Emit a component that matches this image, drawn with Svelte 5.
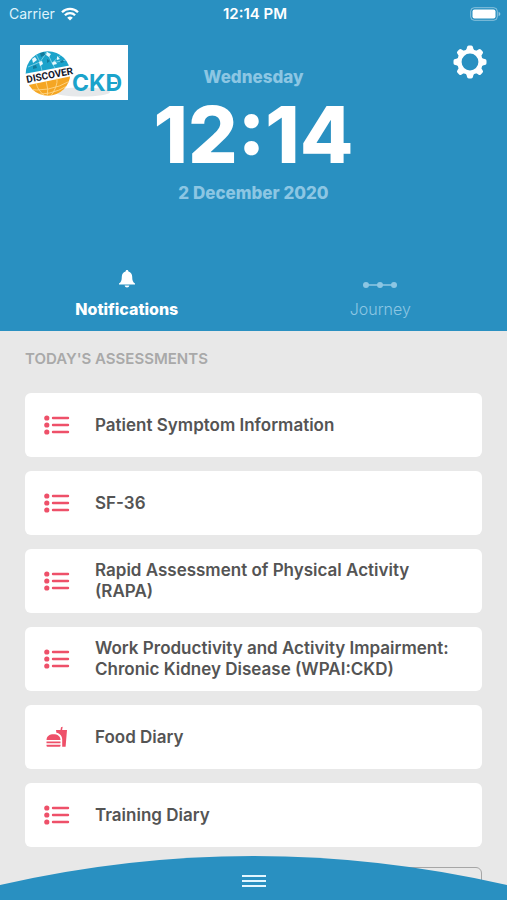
<script lang="ts">
  type Assessment = { id: number; title: string; icon: 'list' | 'food' };

  const assessments: Assessment[] = [
    { id: 1, title: 'Patient Symptom Information', icon: 'list' },
    { id: 2, title: 'SF-36', icon: 'list' },
    { id: 3, title: 'Rapid Assessment of Physical Activity (RAPA)', icon: 'list' },
    { id: 4, title: 'Work Productivity and Activity Impairment: Chronic Kidney Disease (WPAI:CKD)', icon: 'list' },
    { id: 5, title: 'Food Diary', icon: 'food' },
    { id: 6, title: 'Training Diary', icon: 'list' },
  ];

  const teeth = [0, 45, 90, 135, 180, 225, 270, 315];

  let tab = $state('notifications');
</script>

<div class="app">
  <header class="header">
    <div class="status">
      <span class="carrier">
        Carrier
        <svg width="18" height="14" viewBox="0 0 18 14" aria-hidden="true">
          <g fill="none" stroke="#fff" stroke-width="2.3">
            <path d="M1 5.2a11.4 11.4 0 0 1 16 0" />
            <path d="M3.9 8.2a7.2 7.2 0 0 1 10.2 0" />
          </g>
          <path d="M9 13.6 6.2 10.8a4 4 0 0 1 5.6 0z" fill="#fff" />
        </svg>
      </span>
      <span class="status-time">12:14 PM</span>
      <span class="battery">
        <svg width="31" height="14" viewBox="0 0 31 14" aria-hidden="true">
          <rect x="0.7" y="0.7" width="26.6" height="12.6" rx="3.6" fill="none" stroke="#fff" stroke-opacity="0.45" />
          <rect x="2.5" y="2.5" width="23" height="9" rx="2" fill="#fff" />
          <path d="M28.6 4.8q1.8.7 1.8 2.2t-1.8 2.2z" fill="#fff" fill-opacity="0.5" />
        </svg>
      </span>
    </div>

    <div class="top">
      <svg class="logo" width="108" height="55" viewBox="0 0 108 55" role="img" aria-label="Discover CKD">
        <defs>
          <clipPath id="globe"><circle cx="28" cy="28.5" r="22.3" /></clipPath>
        </defs>
        <rect width="108" height="55" fill="#fff" />
        <ellipse cx="62" cy="47" rx="28" ry="4.5" fill="#e6e8ea" />
        <g clip-path="url(#globe)">
          <rect x="4" y="5" width="48" height="48" fill="#fff" />
          <path d="M4 4h48v16L4 29z" fill="#1ba3cb" />
          <g stroke="#8fd5e8" stroke-width="0.8" fill="none">
            <path d="M8 22l12-5 7-10 5 11 14-3M20 17l2 9M32 18l9-8M20 17l-4-8M32 18l3 5" />
          </g>
          <g fill="#e9f8fc">
            <path d="M12 14l3-2 2 3-4 3zM19 17l3-1 1 3-3 2zM27 7l4 2-2 3-3-2zM37 11l3 3-3 1zM32 18l3-2 2 3-4 1z" />
          </g>
          <g fill="#137a9b">
            <path d="M20 8l4-1 1 3-4 2zM13 21l3-1 1 3-4 1zM27 14l3 2-3 2zM40 16l3-1 1 2-3 1z" />
          </g>
          <path d="M4 41l48-10v24H4z" fill="#f5a623" />
          <g fill="none" stroke="#ffdc94" stroke-width="0.8">
            <path d="M5 44q24 4 45-8M9 49q22 2 38-8M16 38q2 8 9 13M26 36q3 8 1 17M37 33q1 9-7 19" />
          </g>
        </g>
        <text class="logo-word" x="7" y="38" transform="rotate(-11 7 38)">DISCOVER</text>
        <text class="logo-ckd" x="52" y="46">CKD</text>
        <path d="M90 38h7" stroke="#1ba3cb" stroke-width="2" />
      </svg>

      <div class="clock">
        <div class="day">Wednesday</div>
        <div class="time">12:14</div>
        <div class="date">2 December 2020</div>
      </div>

      <button class="settings" aria-label="Settings">
        <svg width="34" height="34" viewBox="-17 -17 34 34" aria-hidden="true">
          <circle r="10.6" fill="none" stroke="#fff" stroke-width="4.4" />
          {#each teeth as angle (angle)}
            <path
              d="M-4.6-11.4Q-3.2-12.4-3-14.8Q-2.8-16.5-1.2-16.5H1.2Q2.8-16.5 3-14.8Q3.2-12.4 4.6-11.4z"
              fill="#fff"
              transform="rotate({angle})"
            />
          {/each}
        </svg>
      </button>
    </div>

    <nav class="tabs">
      <button class="tab" class:active={tab === 'notifications'} onclick={() => (tab = 'notifications')}>
        <svg width="18" height="20" viewBox="0 0 18 20" aria-hidden="true">
          <path
            d="M9 1c.9 0 1.4.6 1.4 1.5 2.5.7 3.8 2.8 3.8 5.3 0 3.7.7 5.5 2.8 6.7v.9H1v-.9c2.1-1.2 2.8-3 2.8-6.7 0-2.5 1.3-4.6 3.8-5.3C7.6 1.6 8.1 1 9 1z"
            fill="currentColor"
          />
          <path d="M6.6 16.6h4.8c-.3 1.3-1.2 2-2.4 2s-2.1-.7-2.4-2z" fill="currentColor" />
        </svg>
        <span>Notifications</span>
      </button>
      <button class="tab" class:active={tab === 'journey'} onclick={() => (tab = 'journey')}>
        <svg width="36" height="20" viewBox="0 0 36 20" aria-hidden="true">
          <path d="M4 16h28" stroke="currentColor" stroke-width="1.6" />
          <g fill="currentColor">
            <circle cx="4" cy="16" r="3" />
            <circle cx="18" cy="16" r="3" />
            <circle cx="32" cy="16" r="3" />
          </g>
        </svg>
        <span>Journey</span>
      </button>
    </nav>
  </header>

  <main class="content">
    <h2>TODAY'S ASSESSMENTS</h2>
    <div class="list">
      {#each assessments as item (item.id)}
        <button class="card">
          <svg width="26" height="22" viewBox="0 0 26 22" aria-hidden="true">
            {#if item.icon === 'list'}
              <g fill="#ee5069">
                <circle cx="2.8" cy="4" r="2.6" />
                <circle cx="2.8" cy="11" r="2.6" />
                <circle cx="2.8" cy="18" r="2.6" />
              </g>
              <path d="M9 4h15M9 11h15M9 18h15" stroke="#ee5069" stroke-width="2.4" stroke-linecap="round" />
            {:else}
              <g fill="#ee5069">
                <path d="M2.5 14C2.500 10 5.500 8.200 9.500 8.200s7 1.800 7 5.800z" />
                <path d="M2.500 15.400h14v1.800h-14zM2.500 18.700h14v1q0 1-1 1h-12q-1 0-1-1z" />
                <path d="M12 4h4.500L17 1.200l1.700-.5-.6 3.300h4.900l-1.400 16.700h-3.400v-7C18.200 10 15.800 7.500 12.400 6.800z" />
              </g>
            {/if}
          </svg>
          <span>{item.title}</span>
        </button>
      {/each}
    </div>
    <button class="more" aria-label="More assessments"></button>
  </main>

  <div class="drawer">
    <svg class="curve" viewBox="0 0 507 44" preserveAspectRatio="none" aria-hidden="true">
      <path d="M0 29Q253.5-29 507 29V44H0z" fill="#2990c1" />
    </svg>
    <button class="menu" aria-label="Menu">
      <svg width="24" height="14" viewBox="0 0 24 14" aria-hidden="true">
        <path d="M0 2h24M0 7h24M0 12h24" stroke="#e2f6ff" stroke-width="2" />
      </svg>
    </button>
  </div>
</div>

<style>
  :global(body) {
    margin: 0;
    background: #e8e8e8;
  }

  .app {
    height: 100vh;
    display: flex;
    flex-direction: column;
    overflow: hidden;
    font-family: Inter, 'Liberation Sans', sans-serif;
  }

  button {
    border: 0;
    padding: 0;
    background: none;
    font: inherit;
    color: inherit;
    cursor: pointer;
  }

  svg {
    display: block;
    flex-shrink: 0;
  }

  .header {
    background: #2990c1;
    color: #fff;
    flex-shrink: 0;
  }

  .status {
    display: grid;
    grid-template-columns: 1fr auto 1fr;
    align-items: center;
    height: 27px;
    padding: 0 6px 0 9px;
    font-size: 14px;
  }

  .carrier {
    display: flex;
    align-items: center;
    gap: 6px;
    color: #dff3fb;
  }

  .status-time {
    font-size: 15px;
    font-weight: 600;
  }

  .battery {
    justify-self: end;
  }

  .top {
    display: grid;
    grid-template-columns: 108px 1fr 108px;
    align-items: start;
    padding: 18px 20px 0;
  }

  .clock {
    display: flex;
    flex-direction: column;
    align-items: center;
    padding-top: 20px;
    white-space: nowrap;
  }

  .day,
  .date {
    font-size: 17px;
    line-height: 24px;
    font-weight: 800;
    color: #8cc6e3;
  }

  .time {
    font-size: 78px;
    line-height: 92px;
    font-weight: 800;
  }

  .settings {
    justify-self: end;
  }

  .logo-word {
    font: 700 10px Roboto, sans-serif;
    fill: #14182c;
  }

  .logo-ckd {
    font: 700 23px Inter, sans-serif;
    fill: #1ba3cb;
  }

  .tabs {
    display: grid;
    grid-template-columns: 1fr 1fr;
    padding-top: 64px;
  }

  .tab {
    display: flex;
    flex-direction: column;
    align-items: center;
    gap: 10px;
    padding-bottom: 12px;
    font-size: 16px;
    line-height: 20px;
    font-weight: 300;
    color: #8cc6e3;
  }

  .tab.active {
    font-weight: 800;
    color: #fff;
  }

  .content {
    flex: 1;
    min-height: 0;
    overflow: hidden;
    padding: 18px 25px 0;
  }

  h2 {
    margin: 0 0 24px;
    font-size: 15px;
    line-height: 20px;
    font-weight: 600;
    color: #a9a9a9;
  }

  .list {
    display: grid;
    gap: 14px;
  }

  .card {
    display: flex;
    align-items: center;
    gap: 25px;
    min-height: 64px;
    padding: 0 16px 0 19px;
    border-radius: 6px;
    background: #fff;
    color: #545454;
    font-size: 17px;
    line-height: 21px;
    font-weight: 600;
    text-align: left;
  }

  .more {
    display: block;
    box-sizing: border-box;
    width: 160px;
    height: 64px;
    margin: 20px 0 0 auto;
    border: 1px solid #a6a6a6;
    border-radius: 6px;
  }

  .drawer {
    position: fixed;
    left: 0;
    right: 0;
    bottom: 0;
    height: 44px;
    display: flex;
    justify-content: center;
    align-items: flex-end;
  }

  .curve {
    position: absolute;
    inset: 0;
    width: 100%;
    height: 100%;
  }

  .menu {
    position: relative;
    padding: 12px;
  }
</style>
